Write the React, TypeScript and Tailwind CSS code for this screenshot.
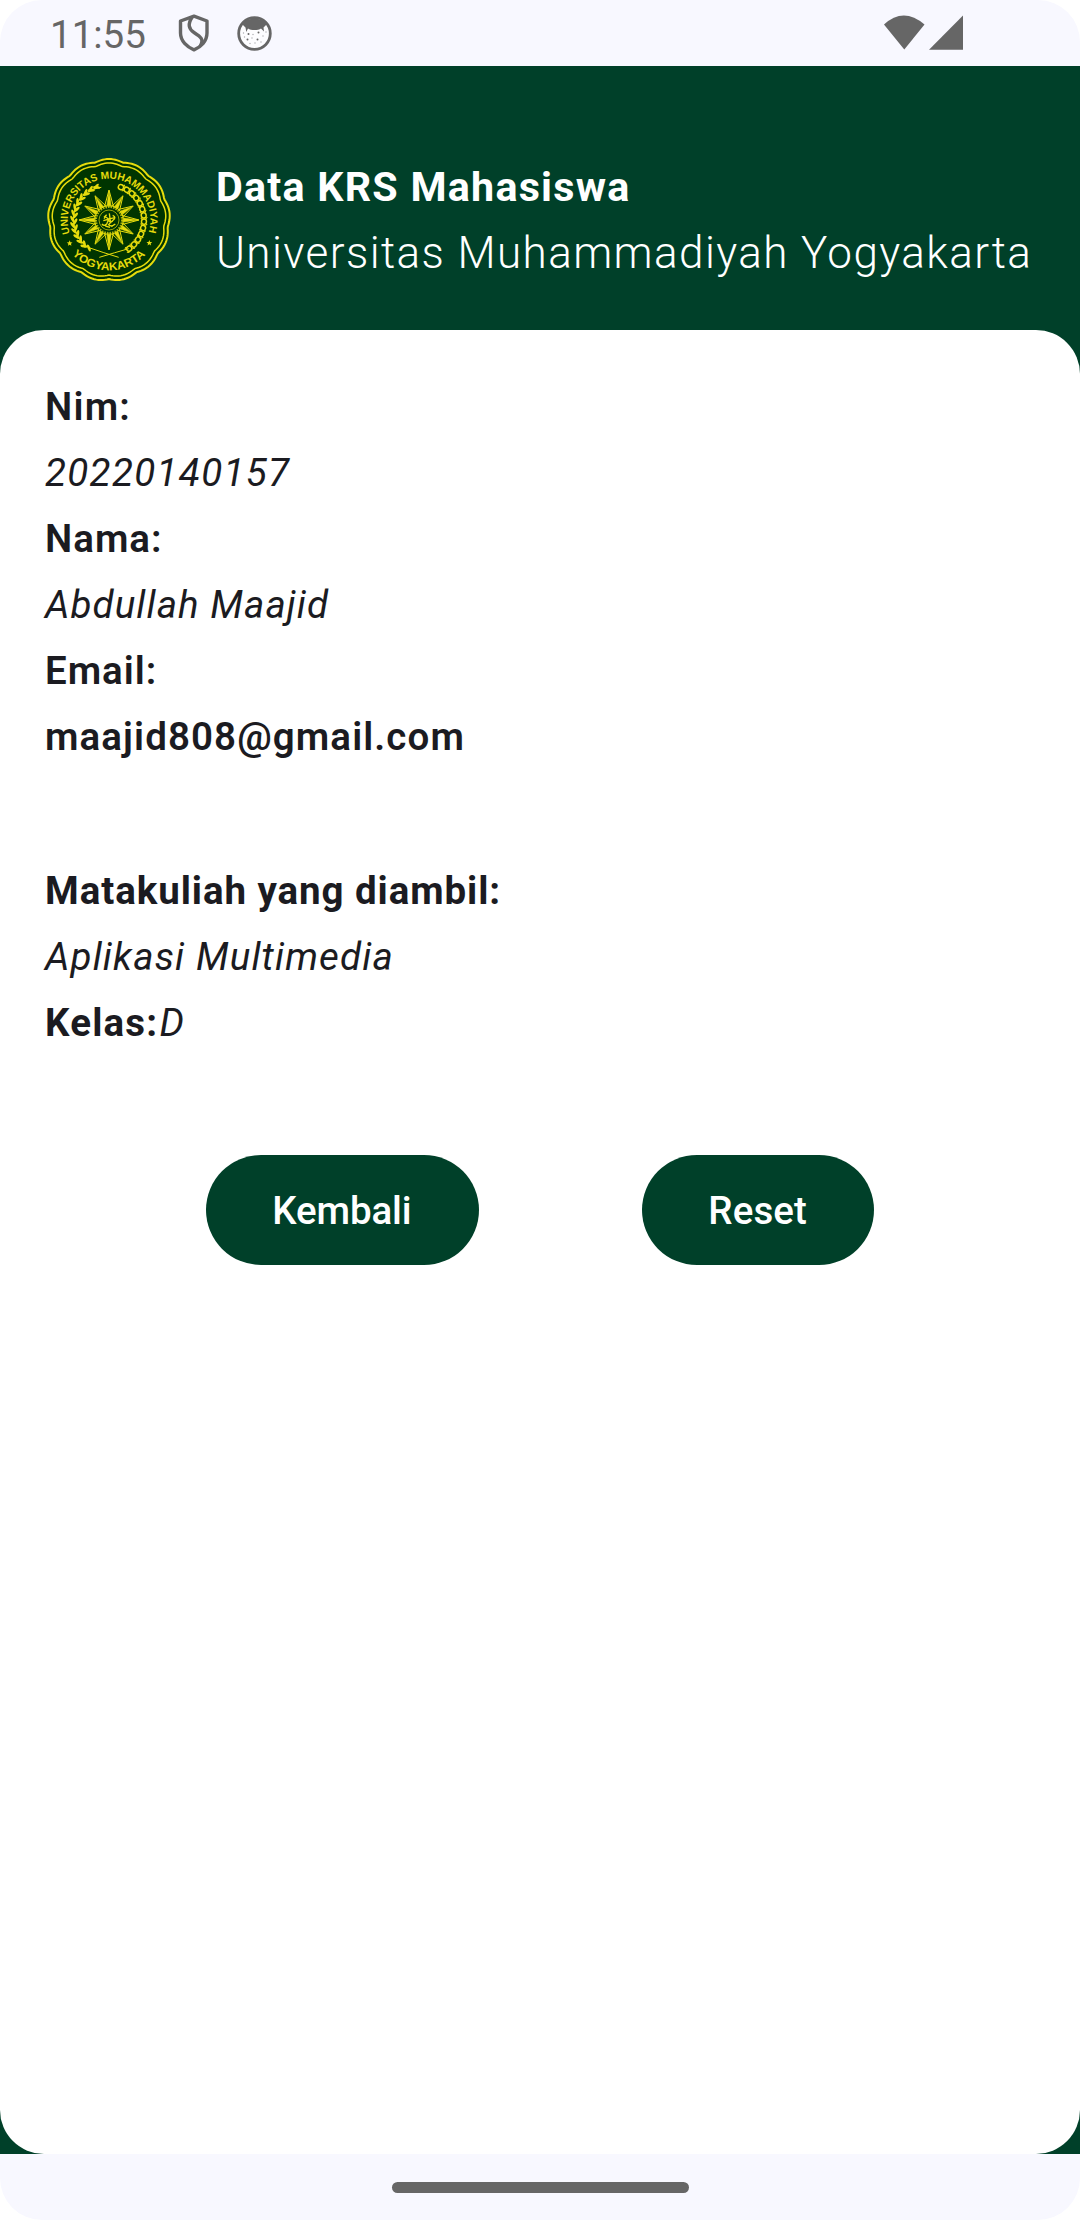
import React from "react";

const CX = 207;
const CY = 210;
const YELLOW = "#e6dc0c";

const polar = (r: number, deg: number): [number, number] => {
  const a = (deg * Math.PI) / 180;
  return [CX + r * Math.cos(a), CY + r * Math.sin(a)];
};

/** Scalloped ring with rounded lobes and inward cusps. */
const scallop = (r: number, depth: number, lobes: number) => {
  const pts: string[] = [];
  for (let d = 0; d < 360; d += 2) {
    const wave = Math.abs(Math.cos(((d + 90) * lobes * Math.PI) / 360));
    const [x, y] = polar(r - depth * (1 - wave), d);
    pts.push(`${x.toFixed(1)},${y.toFixed(1)}`);
  }
  return `M${pts.join("L")}Z`;
};

const ray = (deg: number, inner: number, outer: number, half: number) => {
  const a = polar(inner, deg - half);
  const b = polar(outer, deg);
  const c = polar(inner, deg + half);
  return `M${a[0]},${a[1]}L${b[0]},${b[1]}L${c[0]},${c[1]}Z`;
};

const star = (x: number, y: number, r: number) =>
  Array.from({ length: 10 }, (_, i) => {
    const a = ((i * 36 - 90) * Math.PI) / 180;
    const q = i % 2 ? r * 0.45 : r;
    return `${x + q * Math.cos(a)},${y + q * Math.sin(a)}`;
  }).join(" ");

function Crest() {
  const [ax, ay] = polar(124, 161);
  const [bx, by] = polar(124, 379);
  const [cx, cy] = polar(151, 137);
  const [dx, dy] = polar(151, 42);
  const sides = Array.from({ length: 13 }, (_, i) => i);
  return (
    <svg className="h-[124px] w-[124px] shrink-0" viewBox="21 24 372 372">
      <defs>
        <path id="arcTop" d={`M${ax},${ay}A124,124 0 1 1 ${bx},${by}`} />
        <path id="arcBottom" d={`M${cx},${cy}A151,151 0 0 0 ${dx},${dy}`} />
      </defs>
      <path d={scallop(183, 6, 13)} fill="#003500" stroke={YELLOW} strokeWidth="6" />
      <path d={scallop(171, 6, 13)} fill="none" stroke={YELLOW} strokeWidth="4.500" />
      <g fill={YELLOW} fontFamily="Liberation Sans" fontWeight="700" fontSize="31">
        <text textLength="468" lengthAdjust="spacingAndGlyphs">
          <textPath href="#arcTop" textLength="468" lengthAdjust="spacingAndGlyphs">UNIVERSITAS MUHAMMADIYAH</textPath>
        </text>
        <text textLength="246" lengthAdjust="spacingAndGlyphs" fontSize="34">
          <textPath href="#arcBottom" textLength="246" lengthAdjust="spacingAndGlyphs">YOGYAKARTA</textPath>
        </text>
      </g>
      <polygon points={star(89, 280, 9)} fill={YELLOW} />
      <polygon points={star(328, 279, 9)} fill={YELLOW} />
      {/* sun */}
      {Array.from({ length: 12 }, (_, i) => (
        <g key={i} stroke={YELLOW} fill="none" strokeWidth="3">
          <path d={ray(i * 30, 44, i % 3 ? 84 : 90, 17)} />
          <path d={ray(i * 30, 44, i % 3 ? 80 : 88, 8)} fill={YELLOW} strokeWidth="1.5" />
        </g>
      ))}
      <circle cx={CX} cy={CY} r="40" fill="none" stroke={YELLOW} strokeWidth="8" strokeDasharray="5 3" opacity=".75" />
      <circle cx={CX} cy={CY} r="30" fill="none" stroke={YELLOW} strokeWidth="2" />
      <path
        d="M186 222q6 8 14 0l8-18M192 206q6-10 12 2t14 6M208 190l4 30M200 194l-8 8M218 196q12 6 2 14t-14 14q8 8 20-2M190 212l36-10M196 228l14 4M214 230l8-6"
        fill="none"
        stroke={YELLOW}
        strokeWidth="4"
      />
      {/* rice stalk */}
      <path d="M184 112C120 122 98 170 101 215S130 285 150 294Q190 308 236 322" fill="none" stroke={YELLOW} strokeWidth="3" />
      {sides.map((i) => {
        const deg = 249 - i * 9.9;
        const [x, y] = polar(104, deg);
        return (
          <g key={i} fill={YELLOW}>
            <ellipse cx={x} cy={y} rx="11" ry="4" transform={`rotate(${deg + 62} ${x - 4} ${y})`} />
            <ellipse cx={x} cy={y} rx="11" ry="4" transform={`rotate(${deg + 118} ${x + 5} ${y})`} />
          </g>
        );
      })}
      {/* cotton branch */}
      <path d="M178 322Q224 308 266 296" fill="none" stroke={YELLOW} strokeWidth="3" />
      {sides.map((i) => {
        const deg = -70 + i * 10.4;
        const [x, y] = polar(105, deg);
        return (
          <g key={i} transform={`rotate(${deg + 90} ${x} ${y})`}>
            <ellipse cx={x} cy={y} rx="8" ry="7.500" fill="none" stroke={YELLOW} strokeWidth="4.500" />
            <path d={`M${x + 6} ${y - 10}l6 5M${x + 6} ${y + 10}l6-5`} stroke={YELLOW} strokeWidth="3" />
          </g>
        );
      })}
    </svg>
  );
}

function ShieldIcon() {
  return (
    <svg className="h-[38px] w-8" viewBox="0 0 32 38" fill="none" stroke="#666666" strokeWidth="3.4" strokeLinejoin="round">
      <path d="M16 2.200L29 7V19C29 27 23 33 16 35.800C9 33 2.500 27 2.500 19V7Z" />
      <path d="M14.200 3C9.500 10 10.500 15 16 18.500C23 23 26 25.500 22.500 31.500" />
    </svg>
  );
}

function FaceIcon() {
  return (
    <svg className="h-[35px] w-[35px]" viewBox="0 0 35 35">
      <circle cx="17.500" cy="17.500" r="15.800" fill="#fdfdff" stroke="#666666" strokeWidth="2.800" />
      <path d="M5 8C10 1 25 1 30 8L26.500 11.500L27 15.500L24 12.500C21 14.500 14 14.500 11 12.500L9.300 16L8.500 11.500Z" fill="#666666" />
      <g fill="#666666">
        <circle cx="11.500" cy="18" r="1" />
        <circle cx="21.500" cy="16.500" r="1" />
        <circle cx="10.500" cy="23.500" r="1" />
        <circle cx="20.500" cy="23.500" r="1" />
      </g>
      <g fill="#aaaaae">
        <circle cx="6.500" cy="17" r=".7" />
        <circle cx="16" cy="18.500" r=".7" />
        <circle cx="26" cy="20" r=".7" />
        <circle cx="15" cy="22" r=".7" />
        <circle cx="18" cy="27" r=".7" />
        <circle cx="24" cy="26" r=".7" />
        <circle cx="13" cy="27.500" r=".7" />
        <circle cx="7.500" cy="21" r=".7" />
        <circle cx="29" cy="16" r=".7" />
      </g>
    </svg>
  );
}

function StatusBar() {
  return (
    <div className="flex h-[66px] shrink-0 items-center rounded-t-[42px] bg-[#f8f8ff] pl-[50px] pr-[117px]">
      <span className="w-[128px] pt-[3px] text-[38.5px] leading-[66px] text-[#666666]">11:55</span>
      <ShieldIcon />
      <span className="ml-[27px]">
        <FaceIcon />
      </span>
      <svg className="ml-auto h-9 w-20" viewBox="0 0 80 36" fill="#666666">
        <path d="M1 9.500Q20.500 -8.500 41.500 9.500L21.300 34.500Z" />
        <path d="M46 34.800L80 .5V34.800Z" />
      </svg>
    </div>
  );
}

export default function App() {
  return (
    <div className="flex h-[2220px] w-[1080px] flex-col overflow-hidden bg-white font-['Roboto',sans-serif] text-[#1b1b21]">
      <StatusBar />
      <main className="flex flex-1 flex-col bg-[#004029]">
        <header className="flex items-center pb-11 pl-[47px] pt-[88px] text-white">
          <Crest />
          <div className="ml-[45px] whitespace-nowrap">
            <h1 className="text-[41.25px] font-bold leading-[66px] tracking-[1.22px]">Data KRS Mahasiswa</h1>
            <p className="text-[44px] font-light leading-[66px] tracking-[1.42px]">Universitas Muhammadiyah Yogyakarta</p>
          </div>
        </header>
        <section className="flex-1 rounded-[44px] bg-white px-[45px] py-11 text-[38.5px] leading-[66px]">
          <p className="font-semibold tracking-[1.2px]">Nim:</p>
          <p className="italic tracking-[1.33px]">20220140157</p>
          <p className="font-semibold tracking-[1px]">Nama:</p>
          <p className="italic tracking-[1.09px]">Abdullah Maajid</p>
          <p className="font-semibold tracking-[0.97px]">Email:</p>
          <p className="font-semibold tracking-[1.1px]">maajid808@gmail.com</p>
          <p className="mt-[88px] font-bold tracking-[0.93px]">Matakuliah yang diambil:</p>
          <p className="italic tracking-[1.15px]">Aplikasi Multimedia</p>
          <p>
            <span className="font-bold tracking-[1.2px]">Kelas:</span>
            <span className="ml-px italic">D</span>
          </p>
          <div className="-mx-px mt-[99px] flex justify-evenly font-medium text-white">
            <button className="h-[110px] w-[273px] rounded-full bg-[#004029] pr-0.5 pt-px tracking-[-0.15px]">Kembali</button>
            <button className="h-[110px] w-[232px] rounded-full bg-[#004029] pt-px tracking-[0.1px]">Reset</button>
          </div>
        </section>
      </main>
      <footer className="flex h-[66px] shrink-0 items-center justify-center rounded-b-[42px] bg-[#f8f8ff]">
        <div className="h-[11px] w-[297px] rounded-full bg-[#666666]" />
      </footer>
    </div>
  );
}
